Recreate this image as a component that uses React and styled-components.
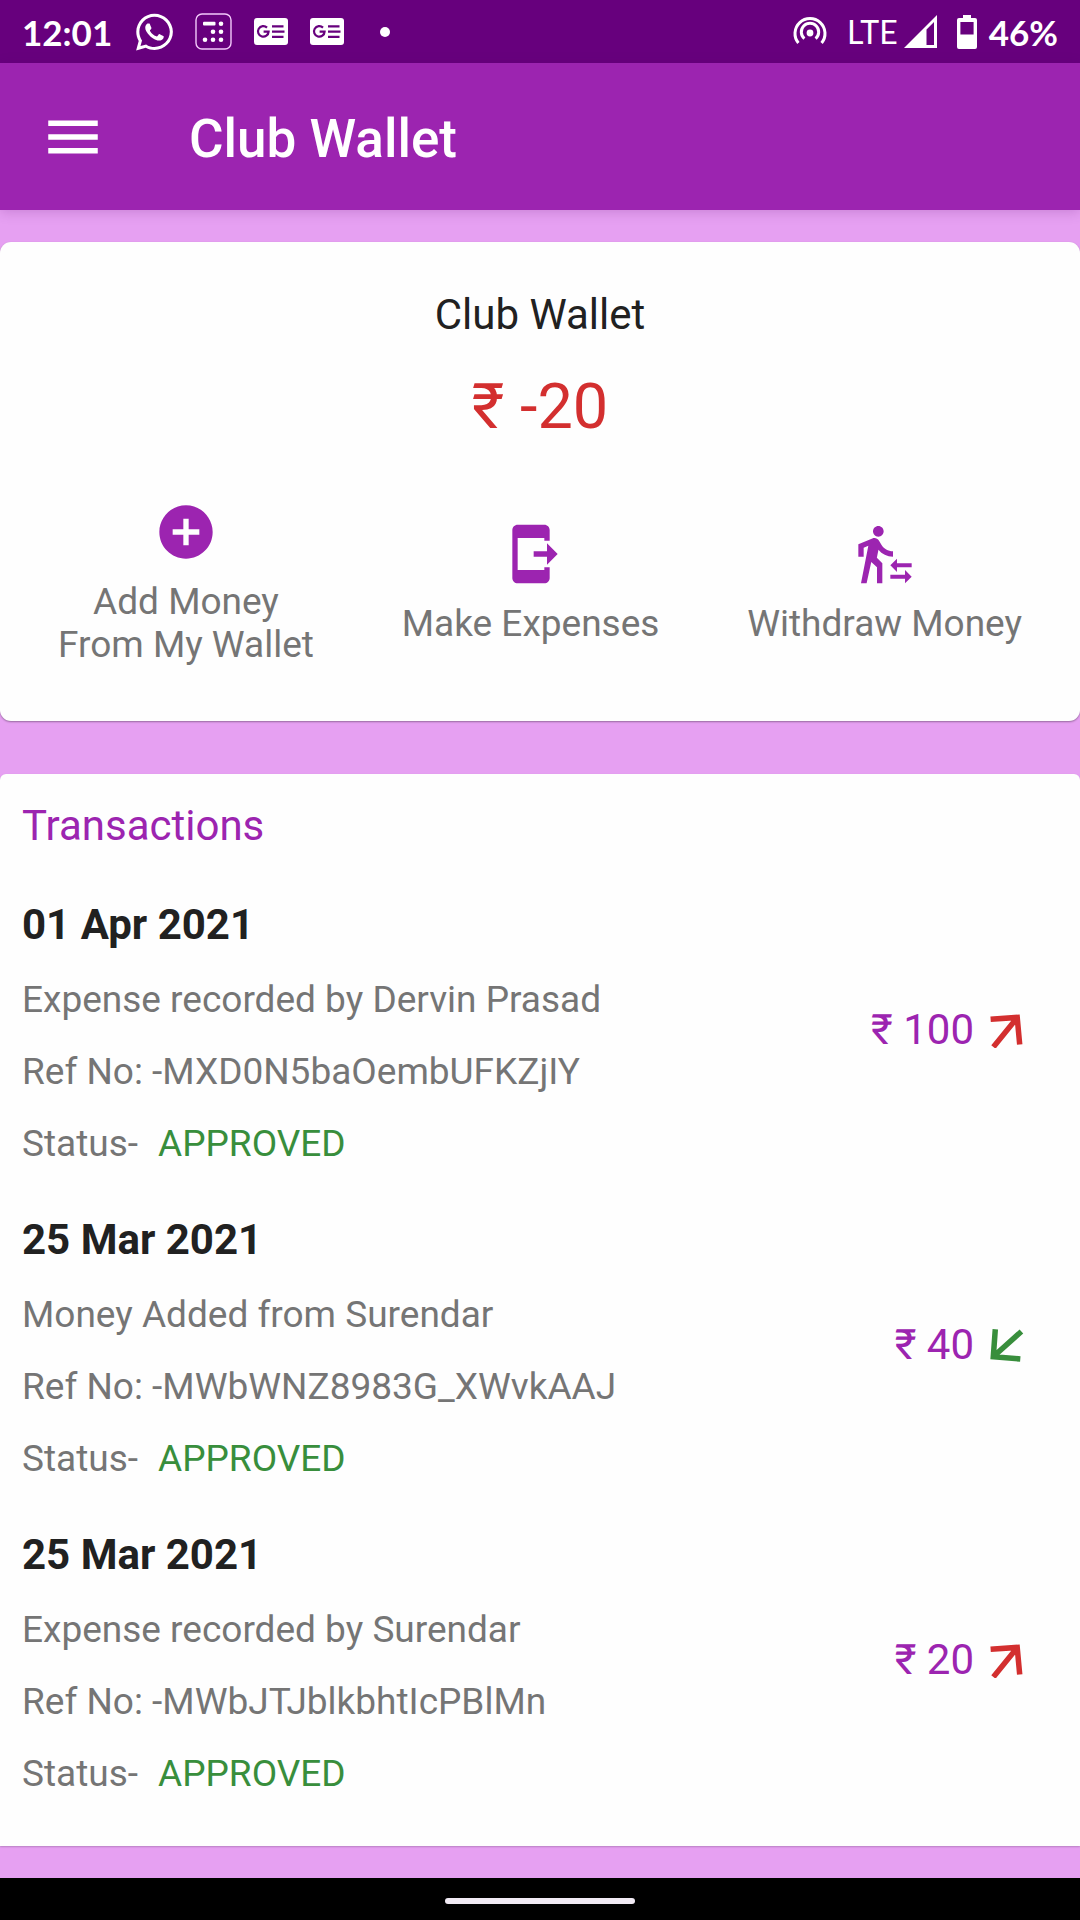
import React from 'react';
import styled, { createGlobalStyle, css } from 'styled-components';
import {
  MdMenu,
  MdAddCircle,
  MdSendToMobile,
  MdTransferWithinAStation,
} from 'react-icons/md';
import { FaWhatsapp } from 'react-icons/fa';

const GlobalStyle = createGlobalStyle`
  * {
    box-sizing: border-box;
  }
  body {
    margin: 0;
    background: #e6a0f2;
    font-family: Roboto, "Liberation Sans", sans-serif;
    color: #212121;
  }
  h1, h2, h3, p, ul {
    margin: 0;
    padding: 0;
  }
  svg {
    display: block;
    flex-shrink: 0;
  }
`;

const Screen = styled.div`
  min-height: 100vh;
  display: flex;
  flex-direction: column;
`;

const StatusBar = styled.div`
  display: flex;
  align-items: center;
  justify-content: space-between;
  height: 63px;
  padding: 0 22px;
  background: #67007d;
  color: #fff;
`;

const StatusGroup = styled.div`
  display: flex;
  align-items: center;
  gap: ${props => props.gap}px;
`;

const StatusText = styled.span`
  font-family: Lato, sans-serif;
  font-size: 35px;
  line-height: 40px;
  font-weight: 700;
  ${props =>
    props.light &&
    css`
      font-size: 32px;
      font-weight: 400;
    `}
`;

const WhatsappIcon = styled(FaWhatsapp)`
  width: 37px;
  height: 42px;
`;

const Dot = styled.span`
  width: 10px;
  height: 10px;
  margin-left: 14px;
  border-radius: 50%;
  background: #fff;
`;

const AppBar = styled.header`
  position: relative;
  display: flex;
  align-items: center;
  gap: 83px;
  height: 147px;
  padding: 0 40px;
  background: #9c24b0;
  color: #fff;
  box-shadow: 0 2px 12px rgba(80, 0, 100, 0.2);
`;

const MenuButton = styled.button`
  padding: 0;
  border: none;
  background: none;
  color: inherit;
  font-size: 66px;
  cursor: pointer;
`;

const AppTitle = styled.h1`
  padding-top: 4px;
  font-size: 53px;
  font-weight: 500;
  line-height: 64px;
`;

const Content = styled.main`
  flex: 1;
  display: flex;
  flex-direction: column;
  gap: 53px;
  padding: 32px 0;
`;

const WalletCard = styled.section`
  padding: 36px 58px 55px;
  border-radius: 11px;
  background: #fefefe;
  box-shadow: 0 1px 2px rgba(0, 0, 0, 0.35);
  text-align: center;
`;

const WalletName = styled.h2`
  font-size: 42px;
  font-weight: 400;
  line-height: 74px;
`;

const Balance = styled.p`
  margin-top: 18px;
  font-size: 63px;
  line-height: 74px;
  color: #d32f2f;
`;

const Actions = styled.div`
  display: flex;
  align-items: center;
  justify-content: space-between;
  margin-top: 56px;
`;

const ActionButton = styled.button`
  display: flex;
  flex-direction: column;
  align-items: center;
  gap: 16px;
  padding: 0;
  border: none;
  background: none;
  font-family: inherit;
  font-size: 37px;
  line-height: 43px;
  color: #757575;
  white-space: pre-line;
  cursor: pointer;
  svg {
    font-size: 64px;
    color: #9c24b0;
  }
`;

const TransactionsCard = styled.section`
  padding: 15px 22px 36px;
  border-radius: 6px 6px 0 0;
  background: #fefefe;
  box-shadow: 0 1px 2px rgba(0, 0, 0, 0.2);
`;

const SectionTitle = styled.h2`
  font-size: 42px;
  font-weight: 400;
  line-height: 74px;
  color: #9c24b0;
`;

const TransactionList = styled.ul`
  margin-top: 2px;
  list-style: none;
`;

const TransactionRow = styled.li`
  display: flex;
  align-items: center;
  justify-content: space-between;
  padding: 21px 34px 0 0;
`;

const TransactionDate = styled.h3`
  font-size: 42px;
  font-weight: 700;
  line-height: 78px;
`;

const Line = styled.p`
  font-size: 37px;
  line-height: 72px;
  color: #757575;
`;

const Status = styled.span`
  margin-left: 20px;
  color: #388e3c;
`;

const Amount = styled.div`
  display: flex;
  align-items: center;
  gap: 14px;
  padding-bottom: 6px;
  font-size: 42px;
  line-height: 48px;
  color: #9c24b0;
`;

const NavBar = styled.div`
  display: flex;
  align-items: center;
  justify-content: center;
  height: 42px;
  background: #000;
`;

const NavHandle = styled.span`
  width: 190px;
  height: 6px;
  margin-top: 4px;
  border-radius: 3px;
  background: #f1eaf4;
`;

function CalculatorIcon() {
  return (
    <svg width="37" height="37" viewBox="0 0 37 37" fill="#fff">
      <rect x="1" y="1" width="35" height="35" rx="6" fill="none" stroke="#f3c9fb" strokeWidth="1.4" />
      <rect x="8" y="8.8" width="12.5" height="3.8" rx="1" />
      <circle cx="26" cy="10.7" r="2.3" />
      <circle cx="18" cy="18.7" r="2.3" />
      <circle cx="26" cy="18.7" r="2.3" />
      <circle cx="10" cy="26.7" r="2.3" />
      <circle cx="18" cy="26.7" r="2.3" />
      <circle cx="26" cy="26.7" r="2.3" />
    </svg>
  );
}

function NewsIcon() {
  return (
    <svg width="34" height="27" viewBox="0 0 34 27" fill="none" stroke="#67007d" strokeWidth="2.2">
      <rect width="34" height="27" rx="3" fill="#fff" stroke="none" />
      <path d="M13 9.6A5.3 5.3 0 1 0 14.6 13.6H9.6" />
      <path d="M18 8.3H29.5M18 13.6H30.5M18 18.9H29.5" />
    </svg>
  );
}

function HotspotIcon() {
  return (
    <svg width="34" height="34" viewBox="0 0 34 34" fill="none" stroke="#fff" strokeWidth="3">
      <path d="M5.4 28A15 15 0 1 1 28.6 28" />
      <path d="M11.4 23.6A8.7 8.7 0 1 1 22.6 23.6" />
      <circle cx="17" cy="18" r="3.4" fill="#fff" stroke="none" />
    </svg>
  );
}

function SignalIcon() {
  return (
    <svg width="33" height="33" viewBox="0 0 33 33" fill="#fff" fillRule="evenodd">
      <path d="M0 33L33 0V33ZM22.5 14.5V30H30V7Z" />
    </svg>
  );
}

function BatteryIcon() {
  return (
    <svg width="20" height="34" viewBox="0 0 20 34" fill="#fff" fillRule="evenodd">
      <path d="M6 0H14V3H18Q20 3 20 5V32Q20 34 18 34H2Q0 34 0 32V5Q0 3 2 3H6ZM3.4 7V19.5H16.6V7Z" />
    </svg>
  );
}

function ArrowIcon({ incoming }) {
  return (
    <svg
      width="36"
      height="36"
      viewBox="0 0 36 36"
      fill="none"
      stroke={incoming ? '#388e3c' : '#d32f2f'}
      strokeWidth="5.5"
    >
      {incoming ? (
        <path d="M7.3 2.3L5.3 29.7L32.3 32M33.4 4.5L6 29" />
      ) : (
        <path d="M2.6 7.3L29.2 5.4L31.7 32.4M5.4 35L28.6 6.4" />
      )}
    </svg>
  );
}

const actions = [
  { label: 'Add Money\nFrom My Wallet', Icon: MdAddCircle },
  { label: 'Make Expenses', Icon: MdSendToMobile },
  { label: 'Withdraw Money', Icon: MdTransferWithinAStation },
];

const transactions = [
  {
    date: '01 Apr 2021',
    text: 'Expense recorded by Dervin Prasad',
    id: '-MXD0N5baOembUFKZjIY',
    status: 'APPROVED',
    amount: 100,
  },
  {
    date: '25 Mar 2021',
    text: 'Money Added from Surendar',
    id: '-MWbWNZ8983G_XWvkAAJ',
    status: 'APPROVED',
    amount: 40,
    incoming: true,
  },
  {
    date: '25 Mar 2021',
    text: 'Expense recorded by Surendar',
    id: '-MWbJTJblkbhtIcPBlMn',
    status: 'APPROVED',
    amount: 20,
  },
];

function Transaction({ date, text, id, status, amount, incoming }) {
  return (
    <TransactionRow>
      <div>
        <TransactionDate>{date}</TransactionDate>
        <Line>{text}</Line>
        <Line>Ref No: {id}</Line>
        <Line>
          Status-<Status>{status}</Status>
        </Line>
      </div>
      <Amount>
        ₹ {amount}
        <ArrowIcon incoming={incoming} />
      </Amount>
    </TransactionRow>
  );
}

function App() {
  return (
    <Screen>
      <GlobalStyle />
      <StatusBar>
        <StatusGroup gap={24}>
          <StatusText>12:01</StatusText>
          <StatusGroup gap={22}>
            <WhatsappIcon />
            <CalculatorIcon />
            <NewsIcon />
            <NewsIcon />
            <Dot />
          </StatusGroup>
        </StatusGroup>
        <StatusGroup gap={20}>
          <HotspotIcon />
          <StatusGroup gap={6}>
            <StatusText light>LTE</StatusText>
            <SignalIcon />
          </StatusGroup>
          <StatusGroup gap={12}>
            <BatteryIcon />
            <StatusText>46%</StatusText>
          </StatusGroup>
        </StatusGroup>
      </StatusBar>
      <AppBar>
        <MenuButton aria-label="Menu">
          <MdMenu />
        </MenuButton>
        <AppTitle>Club Wallet</AppTitle>
      </AppBar>
      <Content>
        <WalletCard>
          <WalletName>Club Wallet</WalletName>
          <Balance>₹ -20</Balance>
          <Actions>
            {actions.map(({ label, Icon }) => (
              <ActionButton key={label}>
                <Icon />
                {label}
              </ActionButton>
            ))}
          </Actions>
        </WalletCard>
        <TransactionsCard>
          <SectionTitle>Transactions</SectionTitle>
          <TransactionList>
            {transactions.map(item => (
              <Transaction key={item.id} {...item} />
            ))}
          </TransactionList>
        </TransactionsCard>
      </Content>
      <NavBar>
        <NavHandle />
      </NavBar>
    </Screen>
  );
}

export default App;
